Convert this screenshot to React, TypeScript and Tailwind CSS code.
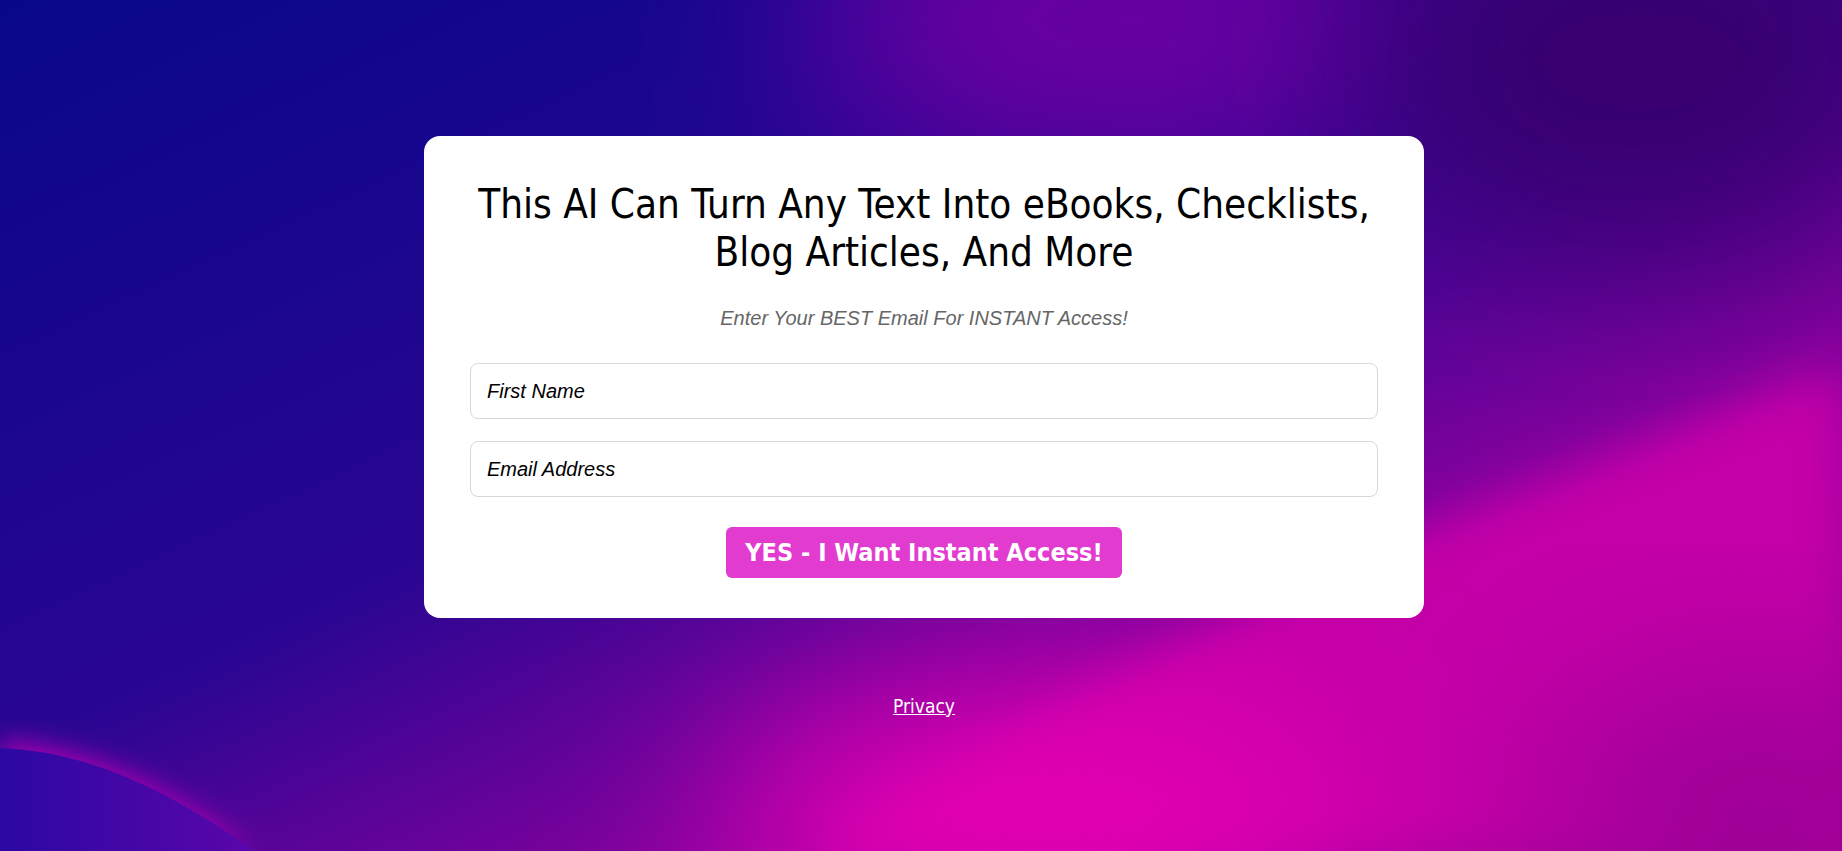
import React from 'react';

const Backdrop: React.FC = () => (
  <svg
    className="absolute inset-0 w-full h-full"
    viewBox="0 0 1842 851"
    preserveAspectRatio="none"
    aria-hidden="true"
  >
    <defs>
      <linearGradient id="base" x1="0" y1="0" x2="1" y2="1">
        <stop offset="0" stopColor="#08078a" />
        <stop offset="0.45" stopColor="#2a0692" />
        <stop offset="0.75" stopColor="#9a00a0" />
        <stop offset="1" stopColor="#b0009a" />
      </linearGradient>
      <linearGradient id="lobe" x1="0" y1="0" x2="1" y2="0">
        <stop offset="0" stopColor="#2c08a2" />
        <stop offset="1" stopColor="#5a06aa" />
      </linearGradient>
      <filter id="soft" x="-50%" y="-50%" width="200%" height="200%">
        <feGaussianBlur stdDeviation="90" />
      </filter>
      <filter id="softer" x="-50%" y="-50%" width="200%" height="200%">
        <feGaussianBlur stdDeviation="24" />
      </filter>
      <filter id="edge" x="-20%" y="-20%" width="140%" height="140%">
        <feGaussianBlur stdDeviation="14" />
      </filter>
    </defs>
    <rect width="1842" height="851" fill="url(#base)" />
    {/* purple glow along the top */}
    <ellipse cx="1120" cy="20" rx="320" ry="160" fill="#6a00a2" filter="url(#soft)" />
    {/* dark corner top right */}
    <ellipse cx="1640" cy="60" rx="280" ry="200" fill="#380070" filter="url(#soft)" />
    {/* magenta sweep */}
    <path
      d="M820 851 C 1020 720, 1260 590, 1500 500 C 1650 445, 1760 390, 1842 370 L1842 851 Z"
      fill="#c400a8"
      filter="url(#softer)"
    />
    <ellipse cx="1040" cy="820" rx="320" ry="130" fill="#e400b2" filter="url(#soft)" />
    <ellipse cx="1760" cy="810" rx="220" ry="130" fill="#9a0094" filter="url(#soft)" />
    {/* left bottom lobe */}
    <path
      d="M0 742 C 90 748, 170 790, 250 851 L0 851 Z"
      fill="#b800b4"
      filter="url(#edge)"
    />
    <path d="M0 748 C 95 752, 175 795, 255 851 L0 851 Z" fill="url(#lobe)" />
  </svg>
);

const App: React.FC = () => {
  return (
    <div className="relative min-h-[851px] w-full overflow-hidden">
      <Backdrop />

      <div className="relative flex flex-col items-center pt-[136px] pl-[6px]">
        {/* Opt-in card */}
        <div className="w-[1000px] bg-white rounded-[16px] px-[46px] pt-[44px] pb-[40px] flex flex-col items-center">
          <h1 className="text-center text-black text-[40px] leading-[48px] font-normal whitespace-nowrap font-['DejaVu_Sans_Condensed','DejaVu_Sans',sans-serif]">
            This AI Can Turn Any Text Into eBooks, Checklists,
            <br />
            Blog Articles, And More
          </h1>

          <p className="mt-[31px] text-[20px] leading-[23px] italic text-[#666666] font-['Liberation_Sans',Arial,sans-serif]">
            Enter Your BEST Email For INSTANT Access!
          </p>

          <form className="w-full mt-[33px] flex flex-col gap-[22px]">
            <input
              type="text"
              placeholder="First Name"
              className="w-full h-[56px] rounded-[8px] border border-[#d6d6de] bg-white px-4 text-[20px] italic text-black placeholder:text-black placeholder:italic outline-none font-['Liberation_Sans',Arial,sans-serif]"
            />
            <input
              type="email"
              placeholder="Email Address"
              className="w-full h-[56px] rounded-[8px] border border-[#d6d6de] bg-white px-4 text-[20px] italic text-black placeholder:text-black placeholder:italic outline-none font-['Liberation_Sans',Arial,sans-serif]"
            />
            <div className="flex justify-center mt-[8px]">
              <button
                type="button"
                className="w-[396px] h-[51px] rounded-[6px] bg-[#e23bd0] text-white text-[25px] leading-none font-bold whitespace-nowrap font-['DejaVu_Sans_Condensed','DejaVu_Sans',sans-serif]"
              >
                YES - I Want Instant Access!
              </button>
            </div>
          </form>
        </div>

        <a
          href="#"
          className="mt-[76px] text-white underline text-[19px] leading-[24px] font-['DejaVu_Sans_Condensed','DejaVu_Sans',sans-serif]"
        >
          Privacy
        </a>
      </div>
    </div>
  );
};

export default App;
